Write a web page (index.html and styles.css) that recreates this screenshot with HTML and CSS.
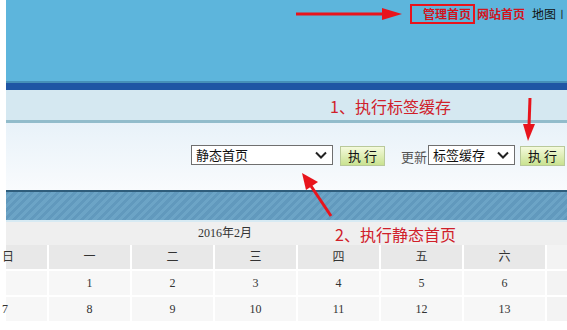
FILE: index.html
```html
<!DOCTYPE html>
<html lang="zh-CN">
<head>
    <meta charset="UTF-8">
    <meta name="viewport" content="width=device-width, initial-scale=1.0">
    <title>管理首页</title>
    <link rel="stylesheet" href="styles.css">
</head>
<body>
    <div class="page">

        <!-- Cabeçalho -->
        <div class="top">
            <div class="topnav">
                <span class="nav-cur">管理首页</span>
                <span class="nav-hot">网站首页</span>
                <span class="nav-link">地图</span>
                <span class="nav-end">丨</span>
            </div>
        </div>
        <div class="bar"></div>
        <div class="tabs"></div>

        <!-- Ferramentas -->
        <div class="tools">
            <div class="select s1">
                <span>静态首页</span>
                <svg width="12" height="8" viewBox="0 0 12 8"><path d="M1 1.5 L6 6.5 L11 1.5" fill="none" stroke="#222" stroke-width="2"/></svg>
            </div>
            <button class="btn">执 行</button>
            <span class="lbl">更新</span>
            <div class="select s2">
                <span>标签缓存</span>
                <svg width="12" height="8" viewBox="0 0 12 8"><path d="M1 1.5 L6 6.5 L11 1.5" fill="none" stroke="#222" stroke-width="2"/></svg>
            </div>
            <button class="btn">执 行</button>
        </div>
        <div class="stripe"></div>

        <!-- Calendario -->
        <div class="cal-title">2016年2月</div>
        <div class="cal">
            <div class="cell head">日</div>
            <div class="cell head">一</div>
            <div class="cell head">二</div>
            <div class="cell head">三</div>
            <div class="cell head">四</div>
            <div class="cell head">五</div>
            <div class="cell head">六</div>
            <div class="cell side"></div>

            <div class="cell"></div>
            <div class="cell">1</div>
            <div class="cell">2</div>
            <div class="cell">3</div>
            <div class="cell">4</div>
            <div class="cell">5</div>
            <div class="cell">6</div>
            <div class="cell side"></div>

            <div class="cell first">7</div>
            <div class="cell">8</div>
            <div class="cell">9</div>
            <div class="cell">10</div>
            <div class="cell">11</div>
            <div class="cell">12</div>
            <div class="cell">13</div>
            <div class="cell side"></div>
        </div>

        <!-- Anotações -->
        <div class="note note1">1、执行标签缓存</div>
        <div class="note note2">2、执行静态首页</div>
        <svg class="arrows" width="567" height="330" viewBox="0 0 567 330">
            <line x1="296" y1="14" x2="384" y2="14" stroke="#e8141c" stroke-width="3"/>
            <polygon points="382,8 402,14 382,20" fill="#e8141c"/>
            <line x1="530" y1="98" x2="529" y2="126" stroke="#e8141c" stroke-width="3"/>
            <polygon points="523,124 535,124 528,141" fill="#e8141c"/>
            <line x1="331" y1="216" x2="311" y2="186" stroke="#e8141c" stroke-width="3"/>
            <polygon points="302,173 318,182 306,190" fill="#e8141c"/>
        </svg>
    </div>
</body>
</html>
```

FILE: styles.css
```css
* {
    margin: 0;
    padding: 0;
    box-sizing: border-box;
}

body {
    background-color: #fff;
    width: 567px;
    height: 330px;
    overflow: hidden;
    font-family: "Liberation Serif", "Noto Sans CJK SC", serif;
    font-size: 12px;
    color: #333;
}

.page {
    position: relative;
    margin-left: 6px;
    width: 561px;
}

/* Cabeçalho */
.top {
    height: 81px;
    background-color: #5db5dc;
    padding-top: 4px;
}

.topnav {
    display: flex;
    align-items: center;
    padding-left: 404px;
    white-space: nowrap;
    font-family: "Noto Sans CJK SC", sans-serif;
    font-size: 12px;
    line-height: 16px;
}

.nav-cur {
    border: 2px solid #e8141c;
    padding: 0 2px 0 11px;
    height: 20px;
    color: #d3141c;
    font-weight: bold;
}

.nav-hot {
    margin-left: 2px;
    color: #d3141c;
    font-weight: bold;
}

.nav-link {
    margin-left: 7px;
    color: #111;
}

.nav-end {
    margin-left: 1px;
    font-size: 10px;
    color: #111;
}

.bar {
    height: 9px;
    border-top: 2px solid #4690b8;
    background-color: #1f56a4;
}

.tabs {
    height: 33px;
    background-color: #d5e8f1;
    border-bottom: 3px solid #92bccb;
}

/* Ferramentas */
.tools {
    height: 67px;
    background: linear-gradient(#e8f2f9, #f9fbfd);
    display: flex;
    align-items: flex-start;
    padding: 22px 0 0 185px;
    font-family: "Noto Sans CJK SC", sans-serif;
    font-size: 13px;
}

.select {
    height: 20px;
    background-color: #fff;
    border: 1px solid #6f6f6f;
    display: flex;
    align-items: center;
    justify-content: space-between;
    padding: 0 5px 0 4px;
    color: #111;
    line-height: 18px;
}

.s1 {
    width: 142px;
}

.s2 {
    width: 87px;
}

.btn {
    height: 20px;
    width: 45px;
    margin: 1px 0 0 7px;
    border: 1px solid #b9c99a;
    background: linear-gradient(#f4fadc, #c9e290);
    font-family: "Noto Sans CJK SC", sans-serif;
    font-size: 13px;
    color: #111;
    line-height: 18px;
}

.s2 + .btn {
    margin-left: 5px;
}

.lbl {
    margin: 3px 1px 0 16px;
    color: #555;
    line-height: 18px;
}

.stripe {
    height: 32px;
    border-top: 2px solid #2f5d7b;
    border-bottom: 2px solid #d7eaf3;
    background: repeating-linear-gradient(-45deg, #6199bd 0, #6199bd 3px, #6ca4c6 3px, #6ca4c6 6px);
}

/* Calendario */
.cal-title {
    height: 23px;
    background-color: #efefef;
    padding-left: 192px;
    line-height: 23px;
    color: #333;
}

.cal {
    display: grid;
    grid-template-columns: 41px repeat(6, 81px) 1fr;
    grid-template-rows: 24px 24px 24px;
    gap: 2px;
    background-color: #fff;
    padding-bottom: 2px;
}

.cell {
    background-color: #f7f7f7;
    text-align: center;
    line-height: 24px;
    color: #333;
}

.cell.head {
    background-color: #e8e8e8;
}

.cell.side {
    background-color: #f3f3f3;
}

.cal .cell:first-child,
.cal .cell.first {
    text-align: left;
    text-indent: -4px;
}

/* Anotações */
.note {
    position: absolute;
    font-family: "Noto Sans CJK SC", sans-serif;
    font-size: 16px;
    color: #d0202a;
    white-space: nowrap;
    line-height: 18px;
}

.note1 {
    left: 324px;
    top: 97px;
}

.note2 {
    left: 329px;
    top: 225px;
}

.arrows {
    position: absolute;
    left: -6px;
    top: 0;
    pointer-events: none;
}
```
